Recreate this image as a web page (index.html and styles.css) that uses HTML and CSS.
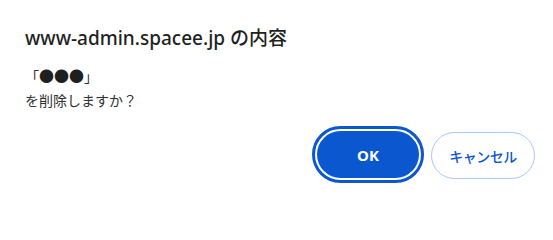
FILE: index.html
```html
<!DOCTYPE html>
<html lang="ja">
<head>
<meta charset="utf-8">
<link rel="stylesheet" href="styles.css">
</head>
<body>
<div class="dialog">
  <div class="title">www-admin.spacee.jp の内容</div>
  <div class="message">
    <div class="line">「<span class="dots">●●●</span>」</div>
    <div class="line">を削除しますか？</div>
  </div>
  <div class="actions">
    <button class="btn btn-primary">OK</button>
    <button class="btn btn-secondary">キャンセル</button>
  </div>
</div>
</body>
</html>
```

FILE: styles.css
```css
html, body {
  margin: 0;
  padding: 0;
  background: #ffffff;
}
body {
  width: 553px;
  height: 202px;
  overflow: hidden;
  font-family: "Noto Sans", "Noto Sans CJK JP", sans-serif;
}
.dialog {
  box-sizing: border-box;
  height: 202px;
  padding: 26px 18px 0 25px;
  display: flex;
  flex-direction: column;
}
.title {
  font-size: 19px;
  line-height: 24px;
  font-weight: 500;
  color: #1f1f1f;
}
.message {
  margin-top: 13px;
  font-size: 14px;
  line-height: 25px;
  color: #303030;
}
.line {
  height: 25px;
}
.dots {
  font-family: "Noto Sans CJK JP", sans-serif;
  font-size: 15px;
  color: #1f1f1f;
}
.actions {
  margin-top: 18px;
  display: flex;
  justify-content: flex-end;
  gap: 12px;
}
.btn {
  box-sizing: border-box;
  height: 47px;
  border-radius: 24px;
  font-family: "Noto Sans", "Noto Sans CJK JP", sans-serif;
  cursor: pointer;
  padding: 0;
}
.btn-primary {
  width: 102px;
  background: #0b57d0;
  color: #ffffff;
  border: none;
  font-size: 15px;
  font-weight: 700;
  outline: 3px solid #0b57d0;
  outline-offset: 2px;
}
.btn-secondary {
  width: 104px;
  background: #ffffff;
  color: #0b57d0;
  border: 1px solid #a8c7fa;
  font-size: 14px;
  font-weight: 500;
  letter-spacing: -0.5px;
  margin-top: 1px;
}
```
